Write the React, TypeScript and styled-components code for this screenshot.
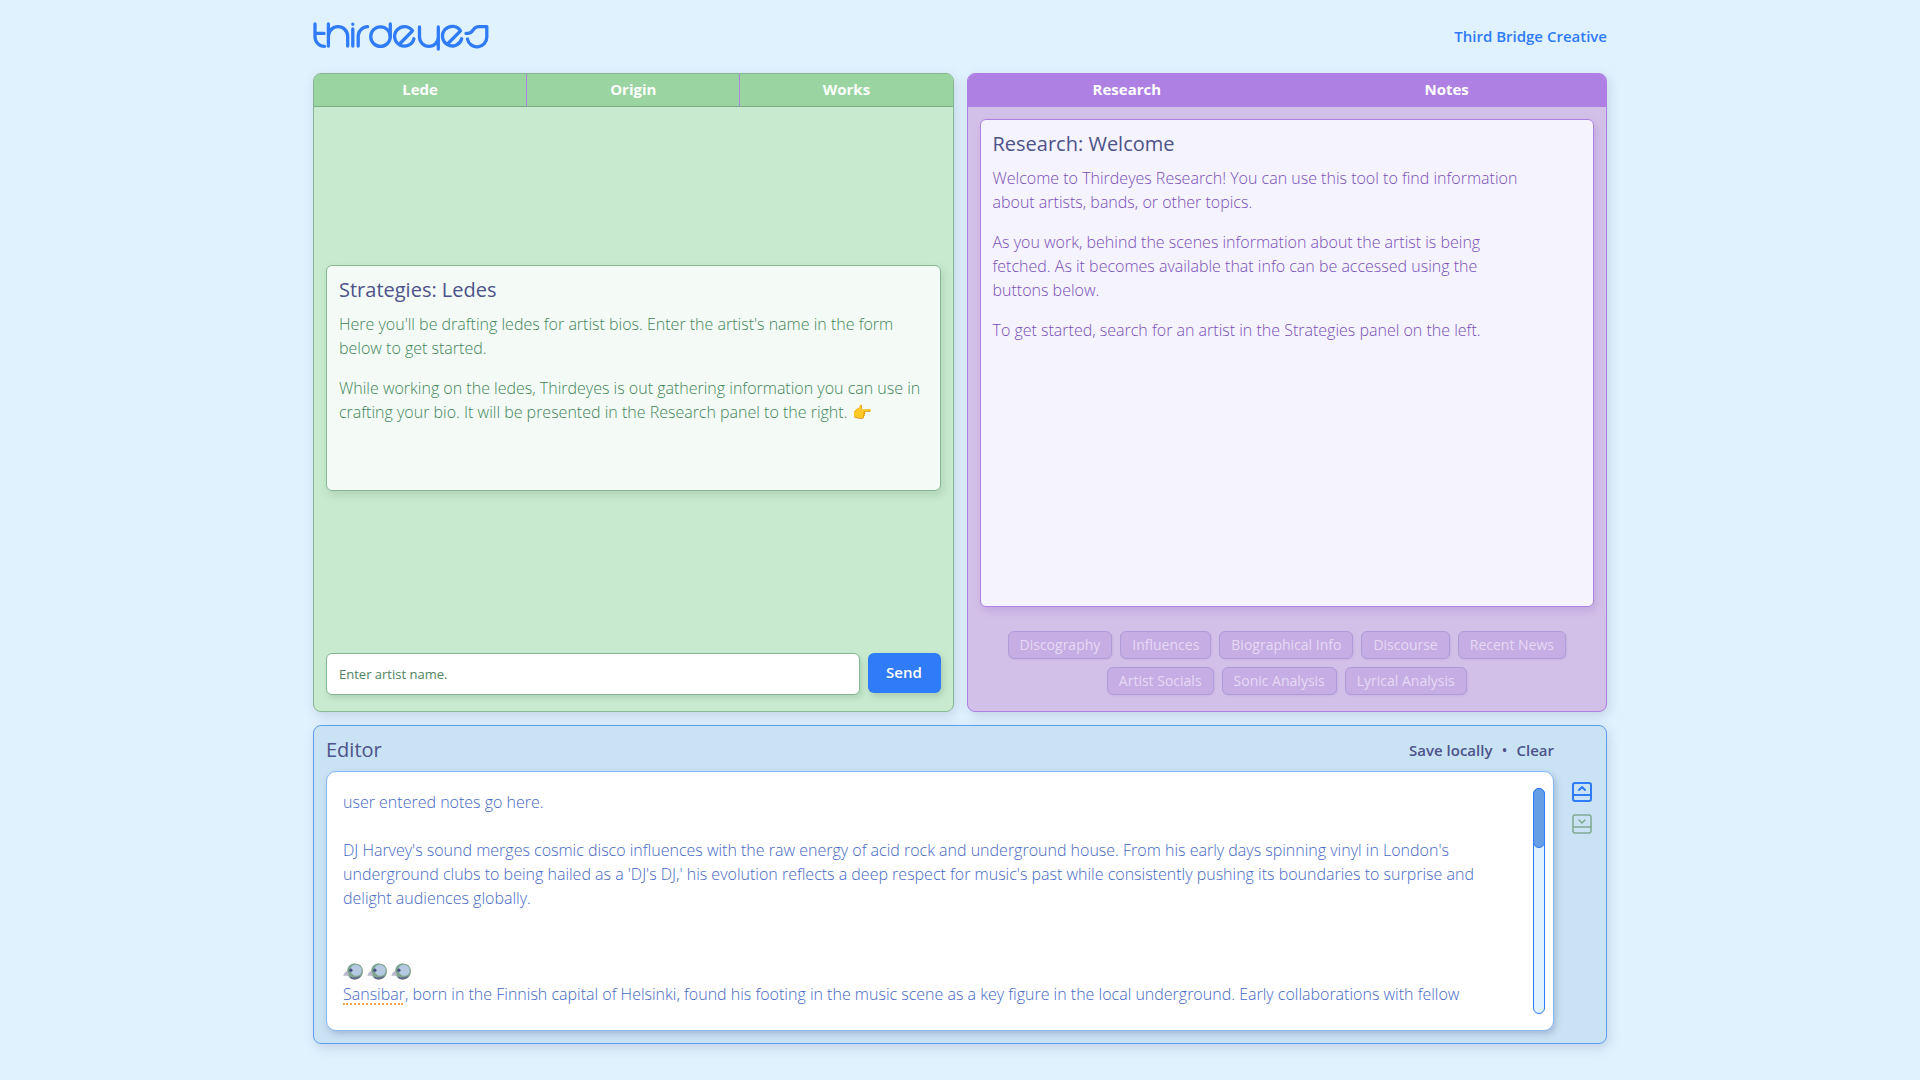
import React, { useState } from "react";
import styled, { createGlobalStyle } from "styled-components";
import { PanelBottomOpen, PanelBottomClose } from "lucide-react";

const blue = "#2f7bf8";
const ink = "#4d528a";

const GlobalStyle = createGlobalStyle`
  *, *::before, *::after { box-sizing: border-box; }
  body {
    margin: 0;
    background: #e0f2fe;
    font-family: "Open Sans", "Noto Sans", sans-serif;
    font-size: 16px;
    line-height: 24px;
  }
  button, input, textarea { font: inherit; }
  h2, p { margin: 0; }
`;

const Page = styled.div`
  display: flex;
  flex-direction: column;
  width: 100%;
  max-width: 1326px;
  min-height: 100vh;
  margin: 0 auto;
  padding: 0 16px 36px;
`;

const Header = styled.header`
  display: flex;
  align-items: center;
  justify-content: space-between;
  height: 73px;
  padding-bottom: 2px;
`;

const Logo = styled.svg`
  display: block;
  stroke: ${blue};
  stroke-width: 3.3;
  stroke-linecap: round;
  stroke-linejoin: round;
  fill: none;
`;

const AccountLink = styled.a`
  color: ${blue};
  font-size: 15px;
  font-weight: 600;
  text-decoration: none;
`;

const Main = styled.main`
  display: grid;
  flex: 1;
  grid-template-columns: repeat(2, minmax(0, 1fr));
  grid-template-rows: 1fr auto;
  gap: 13px;
`;

type Tone = "green" | "purple" | "blue";

const tones = {
  green: { panel: "#c8ebcf", border: "#84b890", tab: "#9ad4a0", tabLine: "#7fa98b", card: "#f4fbf7", text: "#3f8558", shadow: "rgba(80, 110, 90, 0.2)" },
  purple: { panel: "#d3c0e8", border: "#ae80e3", tab: "#ae80e3", tabLine: "#ae80e3", card: "#f5f3fd", text: "#7850b8", shadow: "rgba(150, 110, 200, 0.3)" },
  blue: { panel: "#c9e3f4", border: "#5e9cec", tab: "#c9e3f4", tabLine: "#5e9cec", card: "#ffffff", text: "#4568c4", shadow: "rgba(80, 90, 150, 0.3)" },
};

const Panel = styled.section<{ $tone: Tone }>`
  display: flex;
  flex-direction: column;
  overflow: hidden;
  border: 1px solid ${(p) => tones[p.$tone].border};
  border-radius: 8px;
  background: ${(p) => tones[p.$tone].panel};
  box-shadow: 2px 4px 12px rgba(80, 90, 140, 0.2);
`;

const EditorPanel = styled(Panel)`
  display: grid;
  grid-column: 1 / -1;
  grid-template-columns: minmax(0, 1fr) 24px;
  column-gap: 16px;
  row-gap: 9px;
  padding: 12px;
`;

const Tabs = styled.div<{ $tone: Tone }>`
  display: flex;
  background: ${(p) => tones[p.$tone].tab};
  border-bottom: 1px solid ${(p) => tones[p.$tone].tabLine};
`;

const Tab = styled.button<{ $tone: Tone }>`
  flex: 1;
  height: 32px;
  padding: 0 0 2px;
  border: 0;
  background: none;
  color: #fff;
  font-size: 15px;
  font-weight: 700;
  cursor: pointer;

  & + & { border-left: 1px solid ${(p) => tones[p.$tone].tabLine}; }
`;

const PanelBody = styled.div`
  display: flex;
  flex: 1;
  flex-direction: column;
  padding: 12px 12px 16px;
`;

const Stage = styled.div`
  display: flex;
  flex: 1;
  flex-direction: column;
  justify-content: center;
  padding-bottom: 16px;
`;

const Card = styled.article<{ $tone: Tone; $fill?: boolean }>`
  display: flex;
  flex: ${(p) => (p.$fill ? "1" : "0 0 auto")};
  flex-direction: column;
  gap: 16px;
  min-height: 226px;
  padding: 12px;
  border: 1px solid ${(p) => tones[p.$tone].border};
  border-radius: 6px;
  background: ${(p) => tones[p.$tone].card};
  box-shadow: 2px 4px 8px ${(p) => tones[p.$tone].shadow};
  color: ${(p) => tones[p.$tone].text};
  font-weight: 300;

  p { max-width: ${(p) => (p.$fill ? "90%" : "none")}; }
  h2 { margin-bottom: -6px; }
`;

const Title = styled.h2`
  color: ${ink};
  font-size: 20px;
  font-weight: 500;
  line-height: 24px;
`;

const ArtistForm = styled.form`
  display: flex;
  align-items: flex-start;
  gap: 8px;
`;

const ArtistInput = styled.input`
  flex: 1;
  min-width: 0;
  height: 42px;
  padding: 0 12px;
  border: 1px solid ${tones.green.border};
  border-radius: 6px;
  background: #fff;
  box-shadow: 2px 3px 5px ${tones.green.shadow};
  color: #4f8262;
  font-size: 13px;

  &::placeholder { color: #4f8262; opacity: 1; }
`;

const SendButton = styled.button`
  width: 73px;
  height: 40px;
  padding: 0 0 2px;
  border: 0;
  border-radius: 6px;
  background: ${blue};
  box-shadow: 2px 3px 6px rgba(80, 110, 90, 0.25);
  color: #fff;
  font-size: 15px;
  font-weight: 600;
`;

const Topics = styled.div`
  display: flex;
  flex-wrap: wrap;
  justify-content: center;
  gap: 8px;
  margin-top: 24px;
`;

const TopicButton = styled.button`
  height: 28px;
  padding: 0 11px;
  border: 1px solid #b09bd9;
  border-radius: 6px;
  background: #c6ade3;
  box-shadow: 1px 1px 2px rgba(150, 110, 200, 0.15);
  color: #e6daf4;
  font-size: 14px;
  line-height: 20px;
`;

const EditorHeader = styled.div`
  display: flex;
  align-items: center;
  justify-content: space-between;
  grid-column: 1;
`;

const Actions = styled.div`
  display: flex;
  gap: 9px;
  color: ${ink};
`;

const TextButton = styled.button`
  padding: 0;
  border: 0;
  background: none;
  color: ${ink};
  font-weight: 600;
  font-size: 15px;
  line-height: 24px;
`;

const Frame = styled.div`
  display: flex;
  grid-column: 1;
  gap: 8px;
  padding: 16px 8px 16px 16px;
  border: 1px solid #86b8f2;
  border-radius: 10px;
  background: #fff;
  box-shadow: 2px 3px 6px ${tones.blue.shadow};
`;

const NotesField = styled.div`
  position: relative;
  flex: 1;
  height: 226px;
  overflow: hidden;
`;

const Notes = styled.textarea`
  display: block;
  width: 100%;
  height: 100%;
  padding: 2px 0 0;
  border: 0;
  outline: 0;
  resize: none;
  overflow: hidden;
  background: none;
  color: ${tones.blue.text};
  font-weight: 300;
  line-height: 24px;
`;

const Birds = styled.div`
  position: absolute;
  top: 175px;
  left: 0;
  display: flex;
  gap: 4px;
`;

const SpellingMark = styled.span`
  position: absolute;
  top: 215px;
  left: 0;
  width: 60px;
  border-bottom: 2px dotted #f0a24a;
`;

const ScrollTrack = styled.div`
  width: 12px;
  border: 1px solid ${blue};
  border-radius: 6px;
  background: #e0f2fe;
`;

const ScrollThumb = styled.div`
  height: 60px;
  margin: -1px;
  border: 1px solid ${blue};
  border-radius: 6px;
  background: #669ee6;
`;

const SizeControls = styled.div`
  display: flex;
  flex-direction: column;
  grid-column: 2;
  gap: 8px;
  padding-top: 9px;
`;

const IconButton = styled.button<{ $active?: boolean }>`
  display: block;
  width: 24px;
  height: 24px;
  padding: 0;
  border: 0;
  background: none;
  color: ${(p) => (p.$active ? blue : "#7fab8f")};

  svg { display: block; }
`;

const ThirdeyesLogo = () => (
  <Logo width="176" height="32" viewBox="0 0 176 32" role="img" aria-label="thirdeyes">
    <path d="M2 4V17a9.5 9.5 0 0 0 9.5 9.3M2 13.4H11" />
    <path d="M15.4 4V26M15.4 16.3a9.6 9.6 0 0 1 19.3 0V26" />
    <path d="M39.8 9V26M39.8 4.2v.1" />
    <path d="M45.2 26V16.3a9.6 9.6 0 0 1 9.4-9.6" />
    <circle cx="67.5" cy="16.6" r="9.8" />
    <path d="M77.3 4V16.6" />
    <path d="M100.900 18.8A9.8 9.8 0 1 1 99.5 10.8L87.5 23" />
    <path d="M106.500 7V17a9.4 9.4 0 0 0 18.8 0M125.3 7V29" />
    <path d="M148.700 18.8A9.8 9.8 0 1 1 147.500 10.8L135.500 23" />
    <path d="M153 13.4h1.8c3 0 4.2-1.8 5.4-3.6s3-3.2 6-3.2H173.800V17a9.8 9.8 0 0 1-19.4 2" />
  </Logo>
);

const BirdHead = () => (
  <svg width="20" height="17" viewBox="0 0 20 17" aria-hidden="true">
    <path d="M4.500 6C5.500 2 8.500 .5 12 .5c4.500 0 8 3 8 7.500 0 5-3.500 8.500-8.500 8.500-3.300 0-5.500-1.500-6.300-3.900L.5 12.600c.4-2.200 2-3.600 3.600-4.400z" fill="#7da58f" />
    <path d="M7.500 5.500C8.500 2.700 10.500 1.700 12.700 1.700c3.600 0 6 2.500 6 5.800 0 3.300-2.500 5.300-5.500 5.300-3.600 0-6.200-3.300-5.700-7.300z" fill="#b5c9e3" />
    <path d="M.5 12.600c.4-2.200 2-3.400 3.600-4.100l2.200 3.200z" fill="#c5b5dc" />
    <path d="M6.300 13.200c2.700 1.500 7.400 1.500 11.700-.8-1.300 2.500-3.800 4.100-6.500 4.100-2.600 0-4.400-1.200-5.200-3.300z" fill="#666a8c" />
    <circle cx="7.800" cy="7.300" r="1.700" fill="#4a4f80" />
  </svg>
);

const TOPICS = [
  "Discography", "Influences", "Biographical Info", "Discourse",
  "Recent News", "Artist Socials", "Sonic Analysis", "Lyrical Analysis",
];

const NOTES = `user entered notes go here.

DJ Harvey's sound merges cosmic disco influences with the raw energy of acid rock and underground house. From his early days spinning vinyl in London's
underground clubs to being hailed as a 'DJ's DJ,' his evolution reflects a deep respect for music's past while consistently pushing its boundaries to surprise and
delight audiences globally.



Sansibar, born in the Finnish capital of Helsinki, found his footing in the music scene as a key figure in the local underground. Early collaborations with fellow`;

export default function App() {
  const [artist, setArtist] = useState("");
  const [notes, setNotes] = useState(NOTES);

  return (
    <>
      <GlobalStyle />
      <Page>
        <Header>
          <ThirdeyesLogo />
          <AccountLink href="#account">Third Bridge Creative</AccountLink>
        </Header>
        <Main>
          <Panel $tone="green">
            <Tabs $tone="green">
              {["Lede", "Origin", "Works"].map((name) => (
                <Tab key={name} type="button" $tone="green">{name}</Tab>
              ))}
            </Tabs>
            <PanelBody>
              <Stage>
                <Card $tone="green">
                  <Title>Strategies: Ledes</Title>
                  <p>
                    Here you'll be drafting ledes for artist bios. Enter the artist's name in the form
                    below to get started.
                  </p>
                  <p>
                    While working on the ledes, Thirdeyes is out gathering information you can use in
                    crafting your bio. It will be presented in the Research panel to the right. 👉
                  </p>
                </Card>
              </Stage>
              <ArtistForm onSubmit={(e) => e.preventDefault()}>
                <ArtistInput
                  aria-label="Artist name"
                  placeholder="Enter artist name."
                  value={artist}
                  onChange={(e) => setArtist(e.target.value)}
                />
                <SendButton type="submit">Send</SendButton>
              </ArtistForm>
            </PanelBody>
          </Panel>

          <Panel $tone="purple">
            <Tabs $tone="purple">
              {["Research", "Notes"].map((name) => (
                <Tab key={name} type="button" $tone="purple">{name}</Tab>
              ))}
            </Tabs>
            <PanelBody>
              <Card $tone="purple" $fill>
                <Title>Research: Welcome</Title>
                <p>
                  Welcome to Thirdeyes Research! You can use this tool to find information about
                  artists, bands, or other topics.
                </p>
                <p>
                  As you work, behind the scenes information about the artist is being fetched. As it
                  becomes available that info can be accessed using the buttons below.
                </p>
                <p>To get started, search for an artist in the Strategies panel on the left.</p>
              </Card>
              <Topics>
                {TOPICS.map((topic) => (
                  <TopicButton key={topic} type="button" disabled>{topic}</TopicButton>
                ))}
              </Topics>
            </PanelBody>
          </Panel>

          <EditorPanel $tone="blue">
            <EditorHeader>
              <Title as="label" htmlFor="notes">Editor</Title>
              <Actions>
                <TextButton type="button">Save locally</TextButton>
                <span aria-hidden="true">•</span>
                <TextButton type="button" onClick={() => setNotes("")}>Clear</TextButton>
              </Actions>
            </EditorHeader>
            <Frame>
              <NotesField>
                <Notes
                  id="notes"
                  spellCheck={false}
                  value={notes}
                  onChange={(e) => setNotes(e.target.value)}
                />
                {notes === NOTES && (
                  <>
                    <Birds><BirdHead /><BirdHead /><BirdHead /></Birds>
                    <SpellingMark />
                  </>
                )}
              </NotesField>
              <ScrollTrack><ScrollThumb /></ScrollTrack>
            </Frame>
            <SizeControls>
              <IconButton type="button" aria-label="Expand editor" $active>
                <PanelBottomOpen size={24} />
              </IconButton>
              <IconButton type="button" aria-label="Collapse editor">
                <PanelBottomClose size={24} strokeWidth={1.5} />
              </IconButton>
            </SizeControls>
          </EditorPanel>
        </Main>
      </Page>
    </>
  );
}
